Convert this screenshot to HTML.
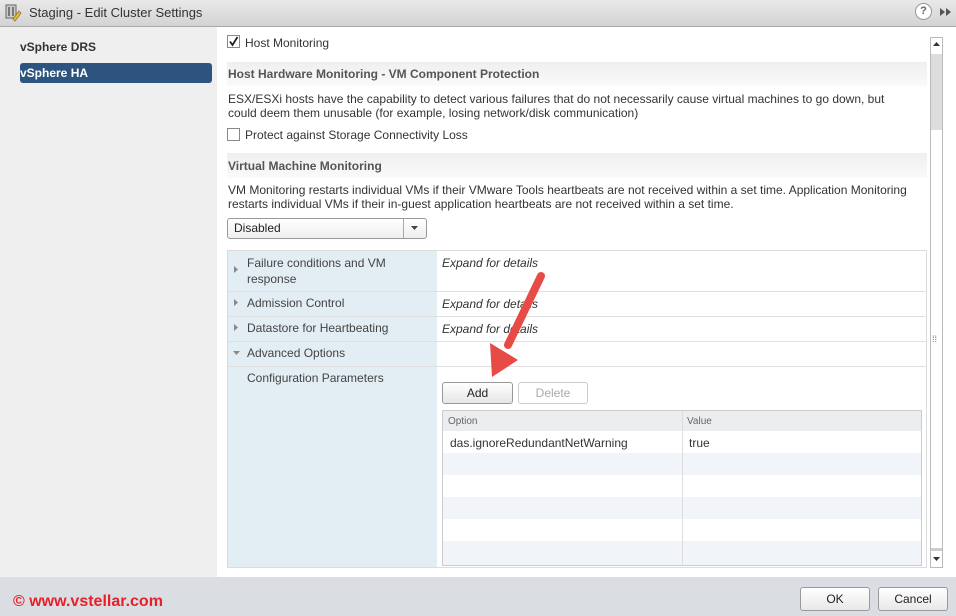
<!DOCTYPE html>
<html><head><meta charset="utf-8"><style>
*{box-sizing:border-box;margin:0;padding:0}
body{width:956px;height:616px;overflow:hidden;font-family:"Liberation Sans",Arial,sans-serif;font-size:12px;color:#333;background:#fff;position:relative}
.a{position:absolute}
.t{white-space:nowrap}
</style></head><body>
<div class="a" style="left:0;top:0;width:956px;height:27px;background:linear-gradient(#e9e9e9,#d3d3d3);border-bottom:1px solid #a9a9a9"></div>
<svg class="a" style="left:4px;top:3px" width="18" height="19" viewBox="0 0 18 19"><rect x="2" y="2" width="10" height="13" fill="#ccc" stroke="#666"/><rect x="4" y="4" width="2" height="9" fill="#777"/><rect x="8" y="4" width="2" height="9" fill="#777"/><path d="M9 16 L15 8 L17 10 L11 18 Z" fill="#e8c040" stroke="#a07010" stroke-width=".8"/></svg>
<div class="a t" style="left:29px;top:5px;font-size:13px;color:#333">Staging - Edit Cluster Settings</div>
<div class="a" style="left:915px;top:3px;width:17px;height:17px;border-radius:50%;border:1px solid #999;background:#fff;font-size:11px;font-weight:bold;color:#666;text-align:center;line-height:15px">?</div>
<svg class="a" style="left:939px;top:7px" width="14" height="10" viewBox="0 0 14 10"><path d="M1 1 L6 5 L1 9Z M7 1 L12 5 L7 9Z" fill="#555"/></svg>

<div class="a" style="left:0;top:27px;width:217px;height:550px;background:#efefef"></div>
<div class="a t" style="left:20px;top:40px;font-weight:bold;color:#333">vSphere DRS</div>
<div class="a" style="left:20px;top:63px;width:192px;height:20px;background:#2c547f;border-radius:3px"></div>
<div class="a t" style="left:20px;top:66px;font-weight:bold;color:#fff">vSphere HA</div>

<div class="a" style="left:227px;top:35px;width:13px;height:13px;border:1px solid #888;background:#fff"></div>
<svg class="a" style="left:227px;top:35px" width="13" height="13" viewBox="0 0 13 13"><path d="M3 6.5 L5.5 10 L10.5 2" stroke="#222" stroke-width="1.8" fill="none"/></svg>
<div class="a t" style="left:245px;top:36px">Host Monitoring</div>
<div class="a" style="left:227px;top:62px;width:700px;height:24px;background:linear-gradient(#efefef,#fafafa)"></div>
<div class="a t" style="left:228px;top:67px;font-weight:bold;color:#555">Host Hardware Monitoring - VM Component Protection</div>
<div class="a t" style="left:228px;top:92px;line-height:14px">ESX/ESXi hosts have the capability to detect various failures that do not necessarily cause virtual machines to go down, but<br>could deem them unusable (for example, losing network/disk communication)</div>
<div class="a" style="left:227px;top:128px;width:13px;height:13px;border:1px solid #888;background:#fff"></div>
<div class="a t" style="left:245px;top:128px">Protect against Storage Connectivity Loss</div>
<div class="a" style="left:227px;top:153px;width:700px;height:25px;background:linear-gradient(#efefef,#fafafa)"></div>
<div class="a t" style="left:228px;top:159px;font-weight:bold;color:#555">Virtual Machine Monitoring</div>
<div class="a t" style="left:228px;top:183px;line-height:14px">VM Monitoring restarts individual VMs if their VMware Tools heartbeats are not received within a set time. Application Monitoring<br>restarts individual VMs if their in-guest application heartbeats are not received within a set time.</div>
<div class="a" style="left:227px;top:218px;width:200px;height:21px;border:1px solid #999;border-radius:3px;background:linear-gradient(#fff,#eee)"></div>
<div class="a" style="left:403px;top:219px;width:1px;height:19px;background:#aaa"></div>
<div class="a t" style="left:234px;top:221px;color:#222">Disabled</div>
<svg class="a" style="left:411px;top:226px" width="7" height="5" viewBox="0 0 7 5"><path d="M0 0 L7 0 L3.5 4Z" fill="#444"/></svg>

<div class="a" style="left:227px;top:250px;width:700px;height:318px;border:1px solid #dcdcdc;background:#fff"></div>
<div class="a" style="left:228px;top:251px;width:209px;height:316px;background:#e3edf4"></div>
<div class="a" style="left:228px;top:291px;width:698px;height:1px;background:#e0e0e0"></div>
<div class="a" style="left:228px;top:316px;width:698px;height:1px;background:#e0e0e0"></div>
<div class="a" style="left:228px;top:341px;width:698px;height:1px;background:#e0e0e0"></div>
<div class="a" style="left:228px;top:366px;width:698px;height:1px;background:#e0e0e0"></div>
<svg class="a" style="left:234px;top:266px" width="5" height="7"><path d="M0 0 L4 3.5 L0 7Z" fill="#888"/></svg>
<div class="a t" style="left:247px;top:255px;line-height:16px;color:#444">Failure conditions and VM<br>response</div>
<svg class="a" style="left:234px;top:299px" width="5" height="7"><path d="M0 0 L4 3.5 L0 7Z" fill="#888"/></svg>
<div class="a t" style="left:247px;top:296px;color:#444">Admission Control</div>
<svg class="a" style="left:234px;top:324px" width="5" height="7"><path d="M0 0 L4 3.5 L0 7Z" fill="#888"/></svg>
<div class="a t" style="left:247px;top:321px;color:#444">Datastore for Heartbeating</div>
<svg class="a" style="left:233px;top:351px" width="7" height="5"><path d="M0 0 L7 0 L3.5 4Z" fill="#888"/></svg>
<div class="a t" style="left:247px;top:346px;color:#444">Advanced Options</div>
<div class="a t" style="left:247px;top:371px;color:#444">Configuration Parameters</div>
<div class="a t" style="left:442px;top:256px;font-style:italic;color:#333">Expand for details</div>
<div class="a t" style="left:442px;top:297px;font-style:italic;color:#333">Expand for details</div>
<div class="a t" style="left:442px;top:322px;font-style:italic;color:#333">Expand for details</div>

<div class="a" style="left:442px;top:382px;width:71px;height:22px;border:1px solid #999;border-radius:3px;background:linear-gradient(#fff,#e6e6e6);text-align:center;line-height:20px;color:#222">Add</div>
<div class="a" style="left:518px;top:382px;width:70px;height:22px;border:1px solid #ccc;border-radius:3px;background:#fff;text-align:center;line-height:20px;color:#aaa">Delete</div>

<div class="a" style="left:442px;top:410px;width:480px;height:156px;border:1px solid #ccc;background:#fff"></div>
<div class="a" style="left:443px;top:411px;width:478px;height:20px;background:#ebedef"></div>
<div class="a" style="left:443px;top:453px;width:478px;height:22px;background:#f1f5f9"></div>
<div class="a" style="left:443px;top:497px;width:478px;height:22px;background:#f1f5f9"></div>
<div class="a" style="left:443px;top:541px;width:478px;height:24px;background:#f1f5f9"></div>
<div class="a" style="left:682px;top:411px;width:1px;height:154px;background:#ddd"></div>
<div class="a t" style="left:448px;top:416px;font-size:10px;color:#666">Option</div>
<div class="a t" style="left:687px;top:416px;font-size:10px;color:#666">Value</div>
<div class="a t" style="left:450px;top:436px;color:#333">das.ignoreRedundantNetWarning</div>
<div class="a t" style="left:689px;top:436px;color:#333">true</div>

<div class="a" style="left:930px;top:37px;width:13px;height:531px;border:1px solid #bbb;background:#fff"></div>
<div class="a" style="left:931px;top:54px;width:11px;height:76px;background:#ddd"></div>
<div class="a" style="left:931px;top:548px;width:11px;height:3px;background:#ccc"></div>
<svg class="a" style="left:933px;top:42px" width="7" height="5"><path d="M3.5 0 L7 4 L0 4Z" fill="#333"/></svg>
<svg class="a" style="left:933px;top:557px" width="7" height="5"><path d="M0 0 L7 0 L3.5 4Z" fill="#333"/></svg>
<div class="a t" style="left:932px;top:334px;font-size:9px;color:#666">⁞⁞</div>

<svg class="a" style="left:0;top:0" width="956" height="616" viewBox="0 0 956 616"><path d="M541 276 L508 345" stroke="#e84a45" stroke-width="8" stroke-linecap="round"/><path d="M492 377 L490 343 L518 360 Z" fill="#e84a45"/></svg>

<div class="a" style="left:0;top:577px;width:956px;height:39px;background:#dadde1"></div>
<div class="a t" style="left:13px;top:593px;font-size:16px;font-weight:bold;color:#e8202a">© www.vstellar.com</div>
<div class="a" style="left:800px;top:587px;width:70px;height:24px;border:1px solid #999;border-radius:3px;background:linear-gradient(#fff,#e8e8e8);text-align:center;line-height:22px;color:#222">OK</div>
<div class="a" style="left:878px;top:587px;width:70px;height:24px;border:1px solid #999;border-radius:3px;background:linear-gradient(#fff,#e8e8e8);text-align:center;line-height:22px;color:#222">Cancel</div>
</body></html>
